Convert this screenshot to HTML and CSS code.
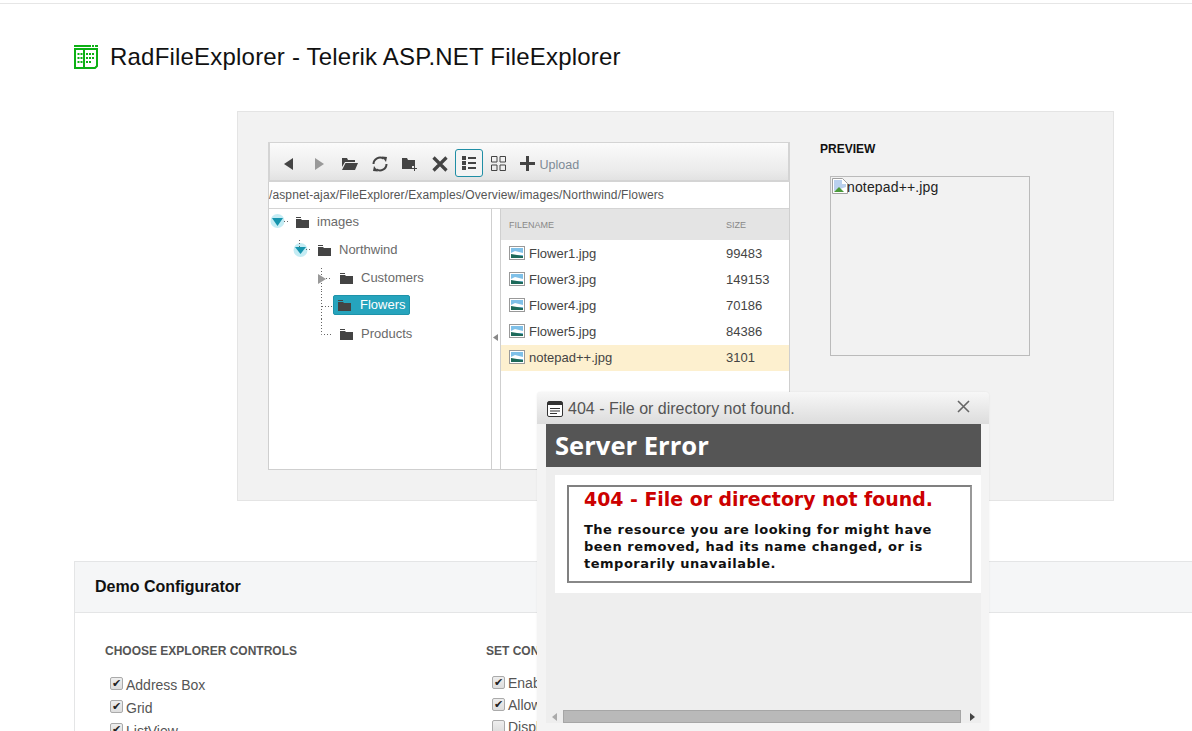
FILE: index.html
```html
<!DOCTYPE html>
<html lang="en">
<head>
<meta charset="utf-8">
<title>RadFileExplorer - Telerik ASP.NET FileExplorer</title>
<link rel="stylesheet" href="styles.css">
</head>
<body>
<div class="topline"></div>
<header class="page-head">
  <svg class="logo" width="24" height="24" viewBox="0 0 24 24"><path fill="#0cb014" d="M0 0h17v2H0zM18 0h2v2h-2zM21 0h3v2h-3z"/><path fill="none" stroke="#0cb014" stroke-width="2" d="M1 4h22v17l-2 2H1zM10 4v19"/><path fill="#0cb014" d="M3.500 8h2v2h-2zM6.500 8h2v2h-2zM3.500 12h2v2h-2zM6.500 12h2v2h-2zM3.500 16h2v2h-2zM6.500 16h2v2h-2zM12 8h2v2h-2zM15 8h2v2h-2zM18 8h2v2h-2zM12 12h2v2h-2zM15 12h2v2h-2zM18 12h2v2h-2zM12 16h2v2h-2zM15 16h2v2h-2z"/></svg>
  <h1 class="page-title">RadFileExplorer - Telerik ASP.NET FileExplorer</h1>
</header>

<section class="demo">
  <div class="explorer">
    <div class="toolbar">
      <span class="tool"><svg width="14" height="14" viewBox="0 0 14 14"><path fill="#444" d="M11 1v12L2 7z"/></svg></span>
      <span class="tool"><svg width="14" height="14" viewBox="0 0 14 14"><path fill="#999" d="M3 1v12l9-6z"/></svg></span>
      <span class="tool"><svg width="17" height="14" viewBox="0 0 17 14"><path fill="#444" d="M1 1h5l1 2h7v2H4L1 10zM4.500 6H17l-3 7H1z"/></svg></span>
      <span class="tool"><svg width="16" height="16" viewBox="0 0 16 16"><g fill="none" stroke="#444" stroke-width="2"><path d="M1.500 8a6.500 6.500 0 0 1 10.200-5.300"/><path d="M14.500 8a6.500 6.500 0 0 1-10.200 5.300"/></g><path fill="#444" d="M10 .5l5 .5-1 5zM6 15.500L1 15l1-5z"/></svg></span>
      <span class="tool"><svg width="15" height="14" viewBox="0 0 15 14"><path fill="#444" d="M0 1h5l1 2h7v6H10v3H0z"/><path fill="#444" d="M12 9h1v2h2v1h-2v2h-1v-2h-2v-1h2z"/></svg></span>
      <span class="tool"><svg width="16" height="16" viewBox="0 0 16 16"><path stroke="#444" stroke-width="3.200" d="M1.500 1.500l13 13M14.500 1.500l-13 13"/></svg></span>
      <span class="tool tool-active"><svg width="14" height="14" viewBox="0 0 14 14"><path fill="#444" d="M0 0h4v4H0zM0 5h4v4H0zM0 10h4v4H0zM6 1h8v2H6zM6 6h8v2H6zM6 11h8v2H6z"/></svg></span>
      <span class="tool tool-grid"><svg width="15" height="15" viewBox="0 0 15 15"><path fill="none" stroke="#444" d="M.5.500h5.500v5.500H.5zM9 .5h5.500v5.500H9zM.5 9h5.500v5.500H.5zM9 9h5.500v5.500H9z"/></svg></span>
      <span class="upload"><svg width="15" height="15" viewBox="0 0 15 15"><path fill="#444" d="M6 0h3v6h6v3H9v6H6V9H0V6h6z"/></svg>Upload</span>
    </div>
    <div class="address">/aspnet-ajax/FileExplorer/Examples/Overview/images/Northwind/Flowers</div>
    <div class="panes">
      <div class="tree">
        <div class="node node-1">
          <svg class="joint" width="22" height="28" viewBox="0 0 22 28"><circle cx="8.500" cy="14" r="7" fill="#c4ecf4"/><path fill="#1594ad" d="M3 11h11l-5.500 8z"/><path stroke="#666" stroke-dasharray="1 2" d="M15 14.500h5"/></svg>
          <svg class="folder" width="13" height="11" viewBox="0 0 13 11"><path fill="#444" d="M0 0h5v1H0zM0 2h5l1 1h7v8H0z"/></svg>
          <span class="node-text">images</span>
        </div>
        <div class="node node-2">
          <svg class="joint" width="22" height="28" viewBox="0 0 22 28"><circle cx="9.500" cy="15" r="7" fill="#c4ecf4"/><path fill="#1594ad" d="M4 12h11l-5.500 7z"/><path stroke="#666" stroke-dasharray="1 2" d="M8.500 5v7M15 14.500h6"/></svg>
          <svg class="folder" width="13" height="11" viewBox="0 0 13 11"><path fill="#444" d="M0 0h5v1H0zM0 2h5l1 1h7v8H0z"/></svg>
          <span class="node-text">Northwind</span>
        </div>
        <div class="node node-3">
          <svg class="joint" width="22" height="28" viewBox="0 0 22 28"><path stroke="#666" stroke-dasharray="1 2" d="M8.500 5v23M13 15.500h6"/><path fill="#999" d="M5 11v10l8-5z"/></svg>
          <svg class="folder" width="13" height="11" viewBox="0 0 13 11"><path fill="#444" d="M0 0h5v1H0zM0 2h5l1 1h7v8H0z"/></svg>
          <span class="node-text">Customers</span>
        </div>
        <div class="node node-3">
          <svg class="joint" width="22" height="28" viewBox="0 0 22 28"><path stroke="#666" stroke-dasharray="1 2" d="M8.500 0v28M9 15.500h11"/></svg>
          <span class="node-selected">
            <svg class="folder" width="13" height="11" viewBox="0 0 13 11"><path fill="#444" d="M0 0h5v1H0zM0 2h5l1 1h7v8H0z"/></svg>
            <span>Flowers</span>
          </span>
        </div>
        <div class="node node-3">
          <svg class="joint" width="22" height="28" viewBox="0 0 22 28"><path fill="none" stroke="#666" stroke-dasharray="1 2" d="M8.500 0v15.500H19"/></svg>
          <svg class="folder" width="13" height="11" viewBox="0 0 13 11"><path fill="#444" d="M0 0h5v1H0zM0 2h5l1 1h7v8H0z"/></svg>
          <span class="node-text">Products</span>
        </div>
      </div>
      <div class="splitter"><svg width="5" height="7" viewBox="0 0 5 7"><path fill="#888" d="M5 0v7L0 3.500z"/></svg></div>
      <div class="grid">
        <div class="grid-row grid-head"><span class="col-name">FILENAME</span><span>SIZE</span></div>
        <div class="grid-row"><span class="col-name"><svg class="file" width="16" height="14" viewBox="0 0 16 14"><use href="#pic"/></svg>Flower1.jpg</span><span>99483</span></div>
        <div class="grid-row"><span class="col-name"><svg class="file" width="16" height="14" viewBox="0 0 16 14"><use href="#pic"/></svg>Flower3.jpg</span><span>149153</span></div>
        <div class="grid-row"><span class="col-name"><svg class="file" width="16" height="14" viewBox="0 0 16 14"><use href="#pic"/></svg>Flower4.jpg</span><span>70186</span></div>
        <div class="grid-row"><span class="col-name"><svg class="file" width="16" height="14" viewBox="0 0 16 14"><use href="#pic"/></svg>Flower5.jpg</span><span>84386</span></div>
        <div class="grid-row grid-selected"><span class="col-name"><svg class="file" width="16" height="14" viewBox="0 0 16 14"><use href="#pic"/></svg>notepad++.jpg</span><span>3101</span></div>
      </div>
    </div>
  </div>
  <aside class="preview">
    <h3 class="preview-label">PREVIEW</h3>
    <div class="preview-box">
      <svg class="broken" width="16" height="16" viewBox="0 0 16 16"><path fill="#fff" stroke="#a0a0a0" d="M.5.500h10l5 5v10H.5z"/><path fill="#b9d0ee" d="M2 2h8v4h4v3L2 13z"/><path fill="#4a9a3a" d="M2 14l5-5 5 5z"/></svg><span>notepad++.jpg</span>
    </div>
  </aside>
</section>

<section class="config">
  <h2 class="config-head">Demo Configurator</h2>
  <div class="config-body">
    <div class="config-col">
      <h4 class="config-title">CHOOSE EXPLORER CONTROLS</h4>
      <label class="opt"><input type="checkbox" checked>Address Box</label>
      <label class="opt"><input type="checkbox" checked>Grid</label>
      <label class="opt"><input type="checkbox" checked>ListView</label>
    </div>
    <div class="config-col config-col-b">
      <h4 class="config-title">SET CONFIGURATION</h4>
      <label class="opt"><input type="checkbox" checked>Enable Paging</label>
      <label class="opt"><input type="checkbox" checked>Allow Paste</label>
      <label class="opt"><input type="checkbox">Display Up Folder</label>
    </div>
  </div>
</section>

<div class="dialog">
  <div class="dialog-title">
    <svg width="16" height="16" viewBox="0 0 16 16"><rect x=".5" y=".5" width="15" height="15" rx="1.500" fill="#fff" stroke="#333"/><path fill="#333" d="M1 1h14v3H1zM3 7h10v1H3zM3 9.500h10v1H3zM3 12h7v1H3z"/></svg>
    <span class="dialog-caption">404 - File or directory not found.</span>
    <svg class="dialog-close" width="13" height="13" viewBox="0 0 13 13"><path stroke="#666" stroke-width="1.600" d="M1 1l11 11M12 1L1 12"/></svg>
  </div>
  <div class="dialog-body">
    <div class="server-head">Server Error</div>
    <div class="error-panel">
      <div class="error-box">
        <h2 class="error-title">404 - File or directory not found.</h2>
        <p class="error-text">The resource you are looking for might have been removed, had its name changed, or is temporarily unavailable.</p>
      </div>
    </div>
    <div class="hscroll">
      <svg width="5" height="8" viewBox="0 0 5 8"><path fill="#aaa" d="M5 0v8L0 4z"/></svg>
      <div class="hscroll-thumb"></div>
      <svg width="5" height="8" viewBox="0 0 5 8"><path fill="#444" d="M0 0v8l5-4z"/></svg>
    </div>
  </div>
</div>

<svg class="defs" width="0" height="0"><defs><g id="pic"><rect x=".5" y=".5" width="15" height="13" fill="#fff" stroke="#999"/><rect x="2" y="2" width="12" height="10" fill="#7fc0e8"/><path fill="#fff" d="M2 7l4-2 8 2v2H2z"/><path fill="#1d6a5a" d="M2 8l6 1 6 1v2H2z"/></g></defs></svg>
</body>
</html>
```
FILE: styles.css
```css
html, body {
  margin: 0;
  height: 731px;
  overflow: hidden;
  background: #fff;
  font-family: "Liberation Sans", Arial, sans-serif;
  color: #333;
}
body { position: relative; }
.defs { display: block; height: 0; }

.topline { height: 3px; border-bottom: 1px solid #e6e6e6; }

.page-head {
  display: flex;
  align-items: center;
  gap: 12px;
  height: 28px;
  padding: 39px 0 0 74px;
}
.logo { display: block; }
.page-title {
  margin: 0;
  font-size: 24px;
  font-weight: 400;
  letter-spacing: .2px;
  color: #111;
  white-space: nowrap;
}

.demo {
  box-sizing: border-box;
  display: flex;
  width: 877px;
  height: 390px;
  margin: 40px 0 0 237px;
  padding: 30px 0 0 30px;
  background: #f2f2f2;
  border: 1px solid #e4e4e4;
}
.explorer {
  box-sizing: border-box;
  width: 522px;
  height: 328px;
  display: flex;
  flex-direction: column;
  background: #fff;
  border: 1px solid #cfcfcf;
  border-top: 0;
}
.toolbar {
  box-sizing: border-box;
  height: 40px;
  flex: none;
  margin: 0 -1px;
  display: flex;
  align-items: center;
  padding: 4px 0 0 4px;
  border: 2px solid #d4d4d4;
  border-top-width: 1px;
  background: linear-gradient(#fbfbfb, #ebebeb 75%, #e2e2e2);
}
.tool {
  box-sizing: border-box;
  flex: none;
  width: 30.2px;
  height: 28px;
  display: flex;
  align-items: center;
  justify-content: center;
}
.tool-active {
  width: 28px;
  margin: -2px 2.2px 0 0;
  border: 1px solid #1f8ea5;
  border-radius: 3px;
  background: #f4f4f4;
}
.tool-grid { margin-left: -2px; }
.upload {
  display: flex;
  align-items: center;
  gap: 5px;
  margin: 2px 0 0 6px;
  font-size: 12.5px;
  color: #7d8a96;
}
.upload svg { margin-top: -2px; }
.address {
  box-sizing: border-box;
  height: 27px;
  flex: none;
  padding-top: 5px;
  font-size: 12px;
  line-height: 17px;
  letter-spacing: .12px;
  color: #555;
  border-bottom: 1px solid #d4d4d4;
  white-space: nowrap;
}
.panes { flex: 1; display: flex; min-height: 0; }

.tree {
  box-sizing: border-box;
  width: 223px;
  flex: none;
  border-right: 1px solid #cfcfcf;
  font-size: 13px;
  color: #6a6a6a;
}
.node { height: 28px; display: flex; align-items: center; }
.node-1 { margin-top: -2px; }
.node-2 { padding-left: 22px; }
.node-3 { padding-left: 44px; }
.joint { flex: none; margin-right: 5px; }
.folder { flex: none; margin: 3px 8px 0 0; }
.node-selected {
  box-sizing: border-box;
  height: 20px;
  width: 77px;
  margin: -1px 0 0 -7px;
  padding-left: 4px;
  display: flex;
  align-items: center;
  color: #fff;
  background: #26a4bd;
  border: 1px solid #1e93aa;
  border-radius: 2px;
}
.node-selected .folder { margin: 2px 9px 0 0; }
.splitter {
  box-sizing: border-box;
  width: 9px;
  flex: none;
  display: flex;
  align-items: flex-start;
  padding: 125px 0 0 1px;
  background: #fff;
  border-right: 1px solid #cfcfcf;
}
.grid { flex: 1; font-size: 13px; color: #444; }
.grid-row {
  box-sizing: border-box;
  height: 26px;
  display: flex;
  align-items: center;
  padding: 0 0 2px 8px;
}
.grid-head {
  height: 31px;
  padding: 1px 0 0 8px;
  margin-bottom: 1px;
  font-size: 9px;
  color: #888;
  background: #e4e4e4;
}
.col-name { width: 217px; display: flex; align-items: center; }
.file { flex: none; margin-right: 4px; }
.grid-selected { background: #fdf0cf; }

.preview { padding-left: 30px; }
.preview-label {
  margin: 0;
  padding-top: 1px;
  height: 33px;
  font-size: 12px;
  line-height: 13px;
  color: #111;
}
.preview-box {
  box-sizing: border-box;
  width: 200px;
  height: 180px;
  margin-left: 10px;
  display: flex;
  align-items: flex-start;
  border: 1px solid #bbb;
  font-size: 14px;
  line-height: 21px;
  letter-spacing: .15px;
  color: #222;
}
.broken { flex: none; margin: 1px -1px 0 1px; }

.config { margin: 60px 0 0 74px; width: 1200px; }
.config-head {
  box-sizing: border-box;
  margin: 0;
  height: 52px;
  padding-left: 20px;
  font-size: 16px;
  line-height: 50px;
  color: #111;
  background: #f5f6f7;
  border: 1px solid #e4e5e6;
}
.config-body {
  display: flex;
  padding: 31px 0 0 30px;
  border-left: 1px solid #e4e5e6;
}
.config-col { width: 381px; }
.config-title {
  margin: 0 0 14px;
  font-size: 12px;
  line-height: 15px;
  color: #555;
}
.opt {
  display: flex;
  align-items: center;
  height: 23px;
  padding-left: 5px;
  font-size: 14px;
  color: #555;
}
.config-col-b .config-title { margin-bottom: 13px; }
.config-col-b .opt { height: 22px; padding-left: 6px; }
.opt input {
  appearance: none;
  box-sizing: border-box;
  flex: none;
  width: 13px;
  height: 13px;
  margin: -2px 3px 0 0;
  display: flex;
  align-items: center;
  justify-content: center;
  background: linear-gradient(#eee, #ddd);
  border: 1px solid #aaa;
  border-radius: 2px;
}
.opt input:checked::after {
  content: "\2714";
  font: 700 11px/11px "DejaVu Sans", sans-serif;
  color: #222;
}

.dialog {
  box-sizing: border-box;
  position: absolute;
  left: 537px;
  top: 392px;
  width: 452px;
  height: 339px;
  display: flex;
  flex-direction: column;
  padding: 0 8px 0 9px;
  background: #f4f4f4;
  border-radius: 4px 4px 0 0;
  box-shadow: 0 0 2px rgba(0, 0, 0, .08);
}
.dialog-title {
  height: 32px;
  flex: none;
  display: flex;
  align-items: center;
  gap: 5px;
  margin: 0 -8px 0 -9px;
  padding: 1px 19px 0 10px;
  box-sizing: border-box;
  background: linear-gradient(#f7f7f7, #dcdcdc);
  border-radius: 4px 4px 0 0;
  color: #555;
  font-size: 16px;
}
.dialog-caption { flex: 1; white-space: nowrap; }
.dialog-close { margin-top: -5px; }
.dialog-body {
  flex: 1;
  display: flex;
  flex-direction: column;
  background: #eee;
  margin-bottom: 8px;
}
.server-head {
  height: 43px;
  flex: none;
  padding-left: 9px;
  background: #555;
  color: #fff;
  font: 700 25.6px/43px "Open Sans", sans-serif;
}
.error-panel {
  margin: 8px 0 0 9px;
  padding: 10px 9px 10px 12px;
  background: #fff;
}
.error-box {
  box-sizing: border-box;
  height: 98px;
  padding: 0 15px;
  border: 2px solid #808080;
  border-right-color: #999;
  border-bottom-color: #888;
  font-family: "DejaVu Sans", Verdana, sans-serif;
}
.error-title {
  margin: 0;
  font-size: 18.9px;
  line-height: 24px;
  font-weight: 700;
  color: #c00;
  white-space: nowrap;
}
.error-text {
  margin: 10px 0 0;
  font-size: 13px;
  line-height: 17px;
  font-weight: 700;
  letter-spacing: .5px;
  color: #111;
}
.hscroll {
  display: flex;
  align-items: center;
  height: 13px;
  margin-top: auto;
  padding: 0 6px;
  gap: 6px;
}
.hscroll-thumb {
  box-sizing: border-box;
  flex: 1;
  height: 13px;
  margin-right: 3px;
  background: #b9b9b9;
  border: 1px solid #a6a6a6;
}
```
